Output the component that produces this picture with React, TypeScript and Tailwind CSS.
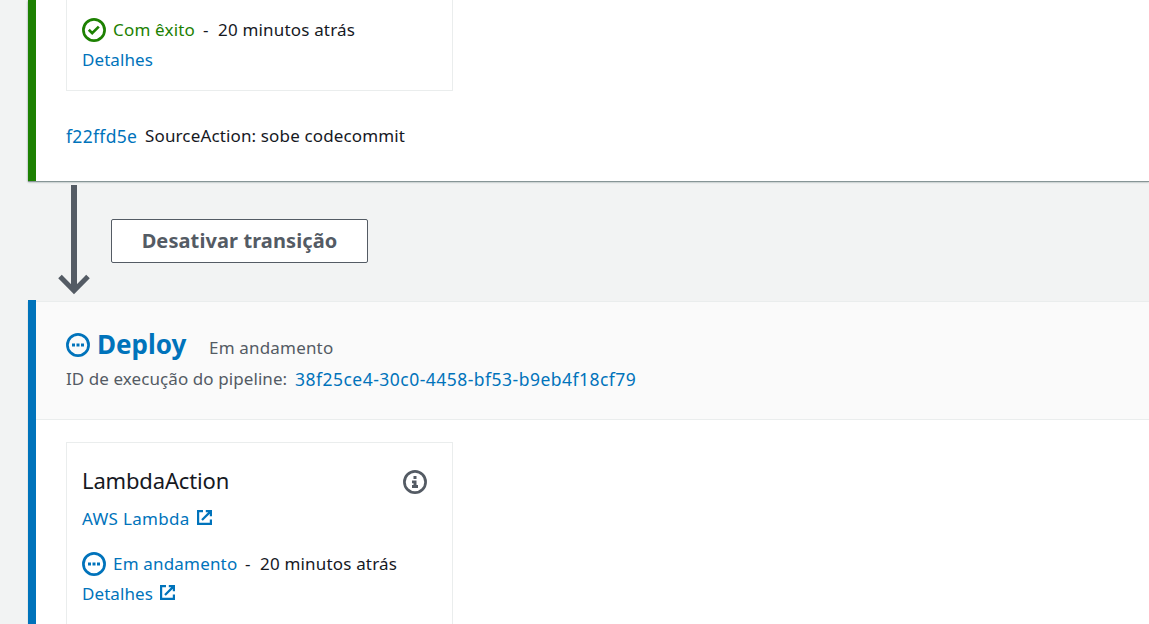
import type { ReactNode } from "react";

function ProgressIcon() {
  return (
    <svg className="h-6 w-6 shrink-0" viewBox="0 0 24 24" fill="none">
      <circle cx="12" cy="12" r="10.6" stroke="#0073bb" strokeWidth="2.7" />
      <path d="M6 10.6h3v3H6zM10.5 10.6h3v3h-3zM15 10.6h3v3h-3z" fill="#0073bb" />
    </svg>
  );
}

function SuccessIcon() {
  return (
    <svg className="h-6 w-6 shrink-0" viewBox="0 0 24 24" fill="none">
      <circle cx="12" cy="12" r="10.6" stroke="#1d8102" strokeWidth="2.7" />
      <path d="M6.8 11.8l3.4 3.4L16.8 8.6" stroke="#1d8102" strokeWidth="2.7" />
    </svg>
  );
}

function InfoIcon() {
  return (
    <svg className="mt-[2px] h-6 w-6 shrink-0" viewBox="0 0 24 24" fill="none">
      <circle cx="12" cy="12" r="10.6" stroke="#545b64" strokeWidth="2.7" />
      <path d="M10.5 6h3v3h-3zM9 10.5h4.5V15H15v3H9v-3h1.5v-1.8H9z" fill="#545b64" />
    </svg>
  );
}

function ExternalIcon() {
  return (
    <svg className="mb-[3px] h-[15px] w-[15px] shrink-0" viewBox="0 0 15 15" fill="none" stroke="#0073bb" strokeWidth="2.2">
      <path d="M6 1.1H1.1v12.8h12.8V9.5" />
      <path d="M8.8 1.1h5.1V6.2M13.4 1.6L5 10" />
    </svg>
  );
}

function Row({ children, className }: { children: ReactNode; className: string }) {
  return <div className={"flex items-center whitespace-nowrap " + className}>{children}</div>;
}

export default function App() {
  return (
    <div className="h-[624px] w-full overflow-hidden bg-[#f2f3f3] pl-7 font-['Noto_Sans',sans-serif] text-[17px] tracking-[0.18px] text-[#16191f]">
      <section className="h-[181px] border-l-8 border-[#1d8102] bg-white pl-[30px] shadow-[0_1px_0_0_#879596,0_1px_2px_0_#879596]">
        <div className="h-[91px] w-[387px] border border-t-0 border-[#eaeded] pl-[15px] pt-[15px]">
          <Row className="h-[30px]">
            <SuccessIcon />
            <span className="ml-[7px] w-[90px] text-[#1d8102]">Com êxito</span>
            <span className="w-[15px]">-</span>
            <span>20 minutos atrás</span>
          </Row>
          <Row className="h-[30px] tracking-[0.08px] text-[#0073bb]">Detalhes</Row>
        </div>
        <Row className="mt-[30px] h-[30px]">
          <span className="w-[79px] text-[17.5px] tracking-[0.32px] text-[#0073bb]">f22ffd5e</span>
          <span className="tracking-[0.14px]">SourceAction: sobe codecommit</span>
        </Row>
      </section>

      <div className="flex h-[119px] pl-[30px] pt-1">
        <svg className="h-[110px] w-8 shrink-0" viewBox="0 0 32 110" fill="none" stroke="#545b64">
          <path d="M16 0V104" strokeWidth="6" />
          <path d="M2 91.5L16 105.8L30 91.5" strokeWidth="5" />
        </svg>
        <button className="ml-[21px] mt-[34px] h-11 w-[257px] whitespace-nowrap rounded-[2px] border border-[#545b64] bg-white text-[20px] font-bold tracking-[0.1px] text-[#545b64]">
          Desativar transição
        </button>
      </div>

      <section className="flex h-[330px] flex-col border-l-8 border-[#0073bb] pt-px shadow-[0_2px_1px_0_#aab7b8]">
        <header className="h-[119px] shrink-0 border-b border-t border-[#eaeded] bg-[#fafafa] pl-[30px] pt-[26px]">
          <Row className="h-[34px]">
            <ProgressIcon />
            <span className="mb-[2px] ml-[7px] w-[112px] text-[26px] font-bold tracking-normal text-[#0073bb]">Deploy</span>
            <span className="mt-[5px] text-[#545b64]">Em andamento</span>
          </Row>
          <Row className="mt-[2px] h-[30px]">
            <span className="w-[229px] tracking-[0.08px] text-[#545b64]">ID de execução do pipeline:</span>
            <span className="text-[17.5px] tracking-[0.48px] text-[#0073bb]">38f25ce4-30c0-4458-bf53-b9eb4f18cf79</span>
          </Row>
        </header>
        <div className="grow bg-white pl-[30px] pt-[22px]">
          <div className="h-[200px] w-[387px] border border-[#eaeded] pl-[15px] pr-[25px] pt-[23px]">
            <Row className="h-[30px] justify-between">
              <span className="mb-[2px] text-[22px] tracking-[-0.15px]">LambdaAction</span>
              <InfoIcon />
            </Row>
            <Row className="mt-[8px] h-[30px] text-[#0073bb]">
              <span className="w-[115px] tracking-[0.3px]">AWS Lambda</span>
              <ExternalIcon />
            </Row>
            <Row className="mt-[15px] h-[30px]">
              <ProgressIcon />
              <span className="ml-[7px] w-[132px] text-[#0073bb]">Em andamento</span>
              <span className="w-[15px]">-</span>
              <span>20 minutos atrás</span>
            </Row>
            <Row className="h-[30px] text-[#0073bb]">
              <span className="w-[78px] tracking-[0.08px]">Detalhes</span>
              <ExternalIcon />
            </Row>
          </div>
        </div>
      </section>
    </div>
  );
}
